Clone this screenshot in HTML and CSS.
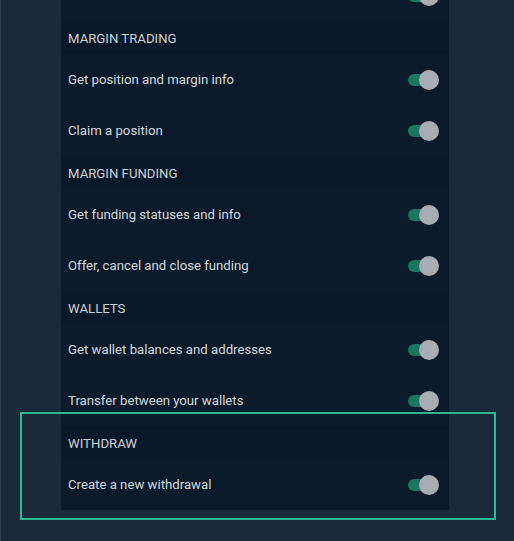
FILE: index.html
```html
<!DOCTYPE html>
<html>
<head>
<meta charset="utf-8">
<link rel="stylesheet" href="styles.css">
</head>
<body>
<div class="screen">
  <div class="panel">
    <div class="row item"><span></span><span class="toggle"></span></div>
    <div class="row head">MARGIN TRADING</div>
    <div class="row item"><span>Get position and margin info</span><span class="toggle"></span></div>
    <div class="row item"><span>Claim a position</span><span class="toggle"></span></div>
    <div class="row head">MARGIN FUNDING</div>
    <div class="row item"><span>Get funding statuses and info</span><span class="toggle"></span></div>
    <div class="row item"><span>Offer, cancel and close funding</span><span class="toggle"></span></div>
    <div class="row head">WALLETS</div>
    <div class="row item"><span>Get wallet balances and addresses</span><span class="toggle"></span></div>
    <div class="row item"><span>Transfer between your wallets</span><span class="toggle"></span></div>
    <div class="row head">WITHDRAW</div>
    <div class="row item"><span>Create a new withdrawal</span><span class="toggle"></span></div>
  </div>
  <div class="highlight"></div>
</div>
</body>
</html>
```
FILE: styles.css
```css
html, body {
  margin: 0;
  padding: 0;
  background: #1b2a3b;
}
.screen {
  position: relative;
  width: 514px;
  height: 541px;
  overflow: hidden;
  background: #1b2a3b;
  box-shadow: inset 1px 0 0 #2c3b4b;
  font-family: Roboto, "Noto Sans", sans-serif;
}
.panel {
  width: 388px;
  margin: -30px 0 0 61px;
  background: #0b1b2c;
  display: flex;
  flex-direction: column;
}
.row {
  display: flex;
  align-items: center;
  justify-content: space-between;
  padding: 0 10px 0 7px;
  color: #d3d8dd;
  font-size: 13.2px;
}
.item {
  height: 51px;
}
.head {
  height: 33px;
  padding-top: 1px;
  box-sizing: border-box;
  background: #0a1929;
  color: #cbd0d6;
}
.toggle {
  position: relative;
  width: 31px;
  height: 20px;
  flex: none;
}
.toggle::before {
  content: "";
  position: absolute;
  left: 0;
  top: 4px;
  width: 26px;
  height: 12px;
  border-radius: 6px;
  background: #1c7560;
}
.toggle::after {
  content: "";
  position: absolute;
  right: 0;
  top: 0;
  width: 20px;
  height: 20px;
  border-radius: 50%;
  background: #a8acb4;
}
.highlight {
  position: absolute;
  left: 20px;
  top: 412px;
  width: 472px;
  height: 104px;
  border: 2px solid #2cb895;
}
```
